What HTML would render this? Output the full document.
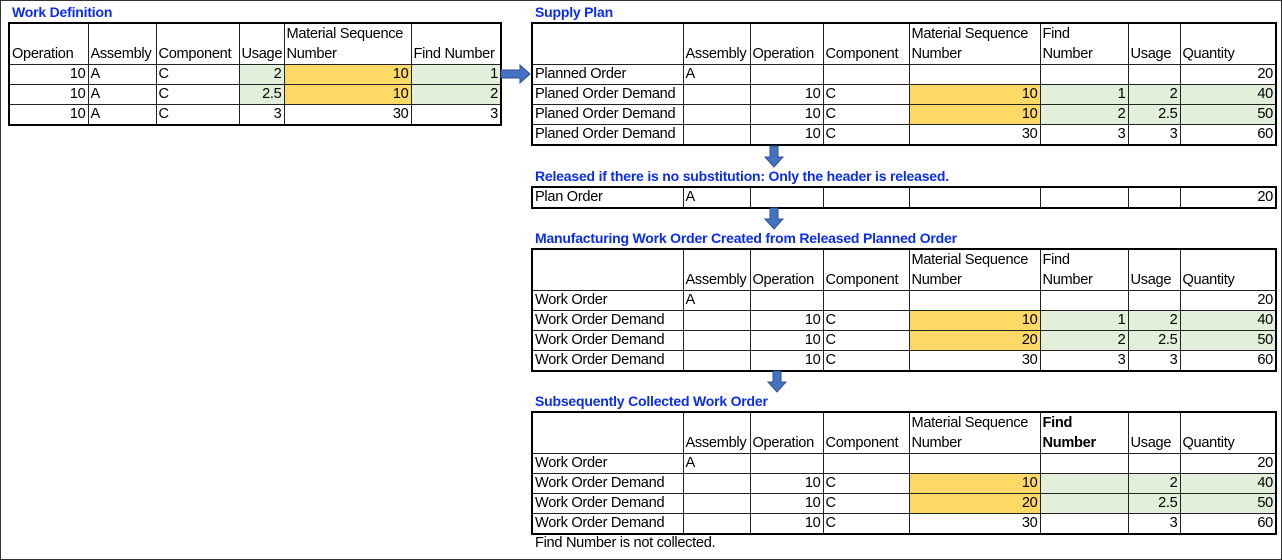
<!DOCTYPE html>
<html><head><meta charset="utf-8"><style>
body{margin:0;width:1282px;height:560px;background:#fff;position:relative;overflow:hidden;font-family:"Liberation Sans",sans-serif;font-size:14.6px;color:#000}
.frame{position:absolute;left:0;top:0;width:1280px;height:558px;border:1px solid #333}
.t{position:absolute;font-weight:bold;color:#0a2cf0;font-size:14px;letter-spacing:-0.2px}
table{position:absolute;border-collapse:collapse;table-layout:fixed;border:2px solid #000}
td{border:1px solid #222;padding:0 2px;height:19px;line-height:19px;white-space:nowrap;overflow:hidden;letter-spacing:-0.3px}
tr.h td{height:40px;line-height:20px;vertical-align:bottom;white-space:normal}
.r{text-align:right}
.g{background:#e2efda}
.y{background:#ffd966}
.arr{position:absolute}
.note{position:absolute;left:535px;top:535px;letter-spacing:-0.3px}
</style></head><body>
<div class="frame"></div>
<div class="t" style="left:12px;top:4px">Work Definition</div>
<table style="left:8px;top:22px;width:492px">
<colgroup><col style="width:79px"><col style="width:68px"><col style="width:83px"><col style="width:45px"><col style="width:127px"><col style="width:90px"></colgroup>
<tr class="h"><td>Operation</td><td>Assembly</td><td>Component</td><td>Usage</td><td>Material Sequence Number</td><td>Find Number</td></tr>
<tr><td class="r">10</td><td>A</td><td>C</td><td class="r g">2</td><td class="r y">10</td><td class="r g">1</td></tr>
<tr><td class="r">10</td><td>A</td><td>C</td><td class="r g">2.5</td><td class="r y">10</td><td class="r g">2</td></tr>
<tr><td class="r">10</td><td>A</td><td>C</td><td class="r">3</td><td class="r">30</td><td class="r">3</td></tr>
</table>
<svg class="arr" style="left:500px;top:64px" width="32" height="20"><path d="M1 6 H20 V1 L30 10 L20 19 V14 H1 Z" fill="#4472c4" stroke="#2f528f"/></svg>

<div class="t" style="left:535px;top:4px">Supply Plan</div>
<table style="left:531px;top:22px;width:744px">
<colgroup><col style="width:151px"><col style="width:67px"><col style="width:73px"><col style="width:86px"><col style="width:131px"><col style="width:88px"><col style="width:52px"><col style="width:96px"></colgroup>
<tr class="h"><td></td><td>Assembly</td><td>Operation</td><td>Component</td><td>Material Sequence Number</td><td>Find<br>Number</td><td>Usage</td><td>Quantity</td></tr>
<tr><td>Planned Order</td><td>A</td><td></td><td></td><td></td><td></td><td></td><td class="r">20</td></tr>
<tr><td>Planed Order Demand</td><td></td><td class="r">10</td><td>C</td><td class="r y">10</td><td class="r g">1</td><td class="r g">2</td><td class="r g">40</td></tr>
<tr><td>Planed Order Demand</td><td></td><td class="r">10</td><td>C</td><td class="r y">10</td><td class="r g">2</td><td class="r g">2.5</td><td class="r g">50</td></tr>
<tr><td>Planed Order Demand</td><td></td><td class="r">10</td><td>C</td><td class="r">30</td><td class="r">3</td><td class="r">3</td><td class="r">60</td></tr>
</table>
<svg class="arr" style="left:764px;top:145px" width="20" height="24"><path d="M6 1 H14 V12 H19 L10 22 L1 12 H6 Z" fill="#4472c4" stroke="#2f528f"/></svg>

<div class="t" style="left:535px;top:168px">Released if there is no substitution: Only the header is released.</div>
<table style="left:531px;top:186px;width:744px">
<colgroup><col style="width:151px"><col style="width:67px"><col style="width:73px"><col style="width:86px"><col style="width:131px"><col style="width:88px"><col style="width:52px"><col style="width:96px"></colgroup>
<tr><td>Plan Order</td><td>A</td><td></td><td></td><td></td><td></td><td></td><td class="r">20</td></tr>
</table>
<svg class="arr" style="left:764px;top:207px" width="20" height="24"><path d="M6 1 H14 V12 H19 L10 22 L1 12 H6 Z" fill="#4472c4" stroke="#2f528f"/></svg>

<div class="t" style="left:535px;top:230px">Manufacturing Work Order Created from Released Planned Order</div>
<table style="left:531px;top:248px;width:744px">
<colgroup><col style="width:151px"><col style="width:67px"><col style="width:73px"><col style="width:86px"><col style="width:131px"><col style="width:88px"><col style="width:52px"><col style="width:96px"></colgroup>
<tr class="h"><td></td><td>Assembly</td><td>Operation</td><td>Component</td><td>Material Sequence Number</td><td>Find<br>Number</td><td>Usage</td><td>Quantity</td></tr>
<tr><td>Work Order</td><td>A</td><td></td><td></td><td></td><td></td><td></td><td class="r">20</td></tr>
<tr><td>Work Order Demand</td><td></td><td class="r">10</td><td>C</td><td class="r y">10</td><td class="r g">1</td><td class="r g">2</td><td class="r g">40</td></tr>
<tr><td>Work Order Demand</td><td></td><td class="r">10</td><td>C</td><td class="r y">20</td><td class="r g">2</td><td class="r g">2.5</td><td class="r g">50</td></tr>
<tr><td>Work Order Demand</td><td></td><td class="r">10</td><td>C</td><td class="r">30</td><td class="r">3</td><td class="r">3</td><td class="r">60</td></tr>
</table>
<svg class="arr" style="left:767px;top:370px" width="20" height="24"><path d="M6 1 H14 V12 H19 L10 22 L1 12 H6 Z" fill="#4472c4" stroke="#2f528f"/></svg>

<div class="t" style="left:535px;top:393px">Subsequently Collected Work Order</div>
<table style="left:531px;top:411px;width:744px">
<colgroup><col style="width:151px"><col style="width:67px"><col style="width:73px"><col style="width:86px"><col style="width:131px"><col style="width:88px"><col style="width:52px"><col style="width:96px"></colgroup>
<tr class="h"><td></td><td>Assembly</td><td>Operation</td><td>Component</td><td>Material Sequence Number</td><td><b>Find<br>Number</b></td><td>Usage</td><td>Quantity</td></tr>
<tr><td>Work Order</td><td>A</td><td></td><td></td><td></td><td></td><td></td><td class="r">20</td></tr>
<tr><td>Work Order Demand</td><td></td><td class="r">10</td><td>C</td><td class="r y">10</td><td class="g"></td><td class="r g">2</td><td class="r g">40</td></tr>
<tr><td>Work Order Demand</td><td></td><td class="r">10</td><td>C</td><td class="r y">20</td><td class="g"></td><td class="r g">2.5</td><td class="r g">50</td></tr>
<tr><td>Work Order Demand</td><td></td><td class="r">10</td><td>C</td><td class="r">30</td><td></td><td class="r">3</td><td class="r">60</td></tr>
</table>
<div class="note">Find Number is not collected.</div>
</body></html>
